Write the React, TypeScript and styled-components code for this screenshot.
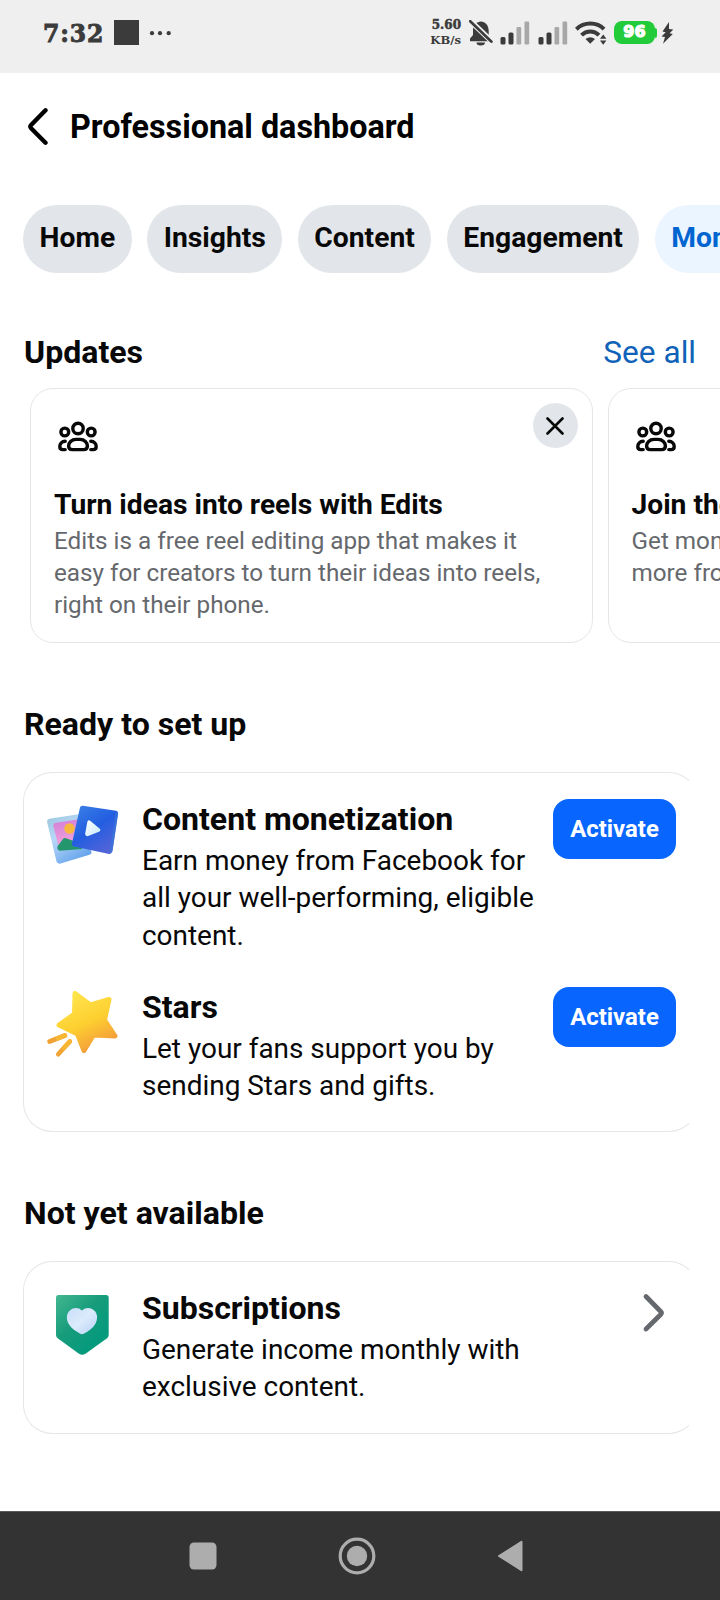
import React from "react";
import styled, { createGlobalStyle } from "styled-components";

const GlobalStyle = createGlobalStyle`
  * { box-sizing: border-box; }
  body { margin: 0; background: #fff; color: #080809; font-family: Roboto, "Liberation Sans", sans-serif; }
  h1, h2, h3, p { margin: 0; }
  button { border: 0; padding: 0; font: inherit; color: inherit; }
  svg { display: block; flex: none; }
`;

const Screen = styled.div`
  width: 720px;
  height: 1600px;
  display: flex;
  flex-direction: column;
  overflow: hidden;
  background: #fff;
`;

const StatusBar = styled.header`
  height: 73px;
  flex: none;
  display: flex;
  justify-content: space-between;
  padding: 0 46px 8px 43px;
  align-items: center;
  background: #efefef;
  color: #3b3b3b;
`;

const StatusGroup = styled.div`
  display: flex;
  align-items: center;
`;

const Clock = styled.span`
  width: 71px;
  padding-top: 2px;
  font: bold 23.5px/26px "DejaVu Serif", serif;
  letter-spacing: 0.9px;
  -webkit-text-stroke: 0.9px #3b3b3b;
`;

const AppSquare = styled.span`
  width: 25px;
  height: 25px;
  background: #3b3b3b;
`;

const NetSpeed = styled.div`
  width: 32px;
  display: flex;
  flex-direction: column;
  align-items: flex-end;
  white-space: nowrap;
  margin-right: 8px;
`;

const SpeedValue = styled.div`
  font: bold 12px/16px "DejaVu Serif", serif;
  -webkit-text-stroke: 0.5px #3b3b3b;
`;

const SpeedUnit = styled.div`
  font: bold 11.6px/15px "DejaVu Serif", serif;
`;

const Spacer = styled.span<{ $width: number }>`
  width: ${(p) => p.$width}px;
`;

const Battery = styled.div`
  width: 41px;
  height: 23px;
  margin-left: 7px;
  border-radius: 8px;
  background: #22cb3a;
  color: #fff;
  text-align: center;
  font: bold 16px/21px "DejaVu Sans", sans-serif;
  -webkit-text-stroke: 1.2px #fff;
`;

const BatteryNub = styled.span`
  width: 2px;
  height: 10px;
  margin-right: 3px;
  border-radius: 0 2px 2px 0;
  background: #22cb3a;
`;

const TitleBar = styled.div`
  height: 107px;
  flex: none;
  display: flex;
  align-items: center;
  gap: 21.5px;
  padding: 1px 0 0 26.5px;
`;

const Heading = styled.h1`
  font-size: 32.3px;
  line-height: 40px;
  font-weight: 700;
  color: #000;
`;

const Tabs = styled.nav`
  display: flex;
  gap: 15.3px;
  padding: 25px 0 0 23px;
  flex: none;
`;

const Tab = styled.button<{ $active?: boolean }>`
  height: 68px;
  flex: none;
  padding: 0 16.6px 3px;
  border-radius: 34px;
  font-size: 28.25px;
  font-weight: 700;
  background: ${(p) => (p.$active ? "#ebf5ff" : "#e2e5e9")};
  color: ${(p) => (p.$active ? "#0064d1" : "#080809")};
`;

const SectionHead = styled.div<{ $top: number; $bottom: number }>`
  display: flex;
  justify-content: space-between;
  height: 40px;
  flex: none;
  margin: ${(p) => p.$top}px 24px ${(p) => p.$bottom}px;
  line-height: 40px;
  font-size: 32.1px;
`;

const SectionTitle = styled.h2`
  font-size: inherit;
  font-weight: 700;
`;

const SeeAll = styled.a`
  padding-top: 1px;
  font-size: 31.6px;
  color: #0f62b8;
`;

const Carousel = styled.div`
  display: flex;
  gap: 15px;
  padding-left: 30px;
  flex: none;
`;

const UpdateCard = styled.article`
  width: 562.5px;
  height: 255px;
  flex: none;
  padding: 14px 14px 0 23px;
  border: 1px solid #e4e6e8;
  border-radius: 23px;
`;

const UpdateTop = styled.div`
  display: flex;
  justify-content: space-between;
  height: 85px;
  padding-left: 3px;
`;

const PeopleSlot = styled.div`
  padding-top: 18px;
`;

const CloseButton = styled.button`
  width: 45px;
  height: 45px;
  border-radius: 50%;
  background: #e2e5e9;
  display: grid;
  place-items: center;
`;

const UpdateTitle = styled.h3`
  font-size: 28.2px;
  line-height: 34px;
  font-weight: 700;
  white-space: nowrap;
`;

const UpdateText = styled.p`
  margin-top: 3px;
  font-size: 24.25px;
  line-height: 32px;
  color: #65686c;
  white-space: nowrap;
`;

const CardClip = styled.div`
  width: 667px;
  margin-left: 23px;
  overflow: hidden;
  flex: none;
`;

const ProductCard = styled.div<{ $height: number }>`
  width: 675px;
  height: ${(p) => p.$height}px;
  padding: 26px 21px 0 22px;
  border: 1px solid #e4e6e8;
  border-right-color: transparent;
  border-radius: 29px;
  display: flex;
  flex-direction: column;
  gap: 33px;
`;

const Product = styled.div`
  display: flex;
  align-items: flex-start;
`;

const Art = styled.div<{ $left?: number; $top?: number }>`
  width: 96px;
  flex: none;
  padding-top: ${(p) => p.$top ?? 0}px;
  margin-left: ${(p) => p.$left ?? 0}px;
  margin-right: ${(p) => -(p.$left ?? 0)}px;
`;

const ProductBody = styled.div`
  flex: 1;
  padding-top: 1px;
  white-space: nowrap;
`;

const ProductTitle = styled.h3`
  font-size: 32.05px;
  line-height: 39px;
  font-weight: 700;
`;

const ProductText = styled.p`
  margin-top: 2.5px;
  font-size: 27.95px;
  line-height: 37.5px;
`;

const ActivateButton = styled.button`
  width: 123px;
  height: 60px;
  border-radius: 16px;
  background: #0866ff;
  color: #fff;
  font-size: 23.9px;
  font-weight: 700;
`;

const ChevronSlot = styled.div`
  padding: 5px 10.5px 0 0;
`;

const NavBar = styled.footer`
  height: 89px;
  flex: none;
  margin-top: auto;
  display: flex;
  align-items: center;
  padding-left: 189px;
  background: #333;
  border-top: 1px solid #5a5a5a;
`;

const NavKey = styled.div<{ $gap: number }>`
  margin-right: ${(p) => p.$gap}px;
`;

const Dots = () => (
  <svg width="34" height="26" viewBox="0 0 34 26" fill="#3b3b3b">
    <circle cx="13" cy="13.2" r="2.100" />
    <circle cx="21" cy="13.2" r="2.100" />
    <circle cx="29.700" cy="13.2" r="2.100" />
  </svg>
);

const Muted = () => (
  <svg width="24" height="26" viewBox="0 0 24 26">
    <path d="M12 1.500C16 1.500 19.700 5 19.700 11v4.500l1.500 3v2.700H1V18.500l3-3.500v-5C4 5 8 1.500 12 1.500ZM7.500 22.500h8.500a4.200 3 0 0 1-8.500 0Z" fill="#3b3b3b" />
    <path d="M-.5-.8 24.500 23" stroke="#efefef" strokeWidth="5.500" />
    <path d="M1.200 1.200 22.500 21.700" stroke="#3b3b3b" strokeWidth="2.600" strokeLinecap="round" />
  </svg>
);

const Signal = () => (
  <svg width="30" height="24" viewBox="0 0 30 24" fill="#3b3b3b">
    <rect x=".5" y="16" width="5" height="7.500" rx="1.500" />
    <rect x="8.500" y="11.500" width="5" height="12" rx="1.500" />
    <rect x="16.500" y="6" width="4.700" height="17.500" rx="1.200" fill="#a8a8a8" />
    <rect x="24.500" y=".5" width="4.700" height="23" rx="1.200" fill="#a8a8a8" />
  </svg>
);

const Wifi = () => (
  <svg width="32" height="24" viewBox="0 0 32 24" fill="none" stroke="#3b3b3b" strokeWidth="4">
    <path d="M1.300 8.200C9 .7 22 .7 29 8.200" />
    <path d="M6.500 14.200c5-5 12.500-5 17.500 0" />
    <path d="M10.500 18Q15.200 14.500 20 18l-4.800 4.700Z" fill="#3b3b3b" stroke="none" />
    <path d="M25 17.800 28.200 13.500 31.400 17.800ZM25 19.500h6.400l-3.200 4.300Z" fill="#3b3b3b" stroke="none" />
  </svg>
);

const Bolt = () => (
  <svg width="14" height="24" viewBox="0 0 14 24" fill="#3b3b3b">
    <path d="M9 1 2.500 10.500l3.200.8L1.500 15.500l3.500.5L3 22.800 12.800 13l-3.200-.8 3.700-3.700-4.300-.5Z" />
  </svg>
);

const Back = () => (
  <svg width="22" height="40" viewBox="0 0 22 40" fill="none" stroke="#000" strokeWidth="4.400" strokeLinecap="round" strokeLinejoin="round">
    <path d="M18.500 3.300 4.100 18Q2.600 19.600 4.100 21.200L18.500 35.700" />
  </svg>
);

const People = () => (
  <svg width="42" height="32" viewBox="0 0 42 32" fill="none" stroke="#080809" strokeWidth="3.400" strokeLinecap="round" strokeLinejoin="round">
    <circle cx="21" cy="7.500" r="5.200" />
    <circle cx="7.800" cy="11" r="3.900" />
    <circle cx="34.200" cy="11" r="3.900" />
    <path d="M19 18.400h4c4.500 0 7.400 3.200 7.400 6.500 0 2.400-1.400 3.700-3.800 3.700H15.400c-2.400 0-3.800-1.300-3.800-3.700 0-3.300 2.900-6.500 7.400-6.500Z" />
    <path d="M8.200 20.300C4.800 20.300 2.800 22.600 2.800 25.600c0 2 1.200 3 3 3h2.400M33.800 20.300c3.400 0 5.400 2.300 5.400 5.300 0 2-1.200 3-3 3h-2.400" />
  </svg>
);

const Cross = () => (
  <svg width="18" height="18" viewBox="0 0 18 18" stroke="#080809" strokeWidth="2.600" strokeLinecap="round">
    <path d="m1.500 1.500 15 15m0-15-15 15" />
  </svg>
);

const MonetizationArt = () => (
  <svg width="74" height="68" viewBox="0 0 74 68">
    <defs>
      <linearGradient id="frame" x1="0" y1="0" x2=".6" y2="1"><stop stopColor="#9bc6dc" /><stop offset=".45" stopColor="#b8d8f8" /><stop offset="1" stopColor="#68a5ed" /></linearGradient>
      <linearGradient id="photo" x1="0" y1="0" x2=".2" y2="1"><stop stopColor="#d47dd8" /><stop offset="1" stopColor="#f3a9dc" /></linearGradient>
      <linearGradient id="video" x1=".1" y1="0" x2=".75" y2="1"><stop stopColor="#397fe6" /><stop offset=".5" stopColor="#235ee1" /><stop offset="1" stopColor="#5664d7" /></linearGradient>
      <linearGradient id="play" x1="0" y1="0" x2="1" y2="1"><stop stopColor="#fff" /><stop offset="1" stopColor="#c5e9fa" /></linearGradient>
    </defs>
    <path d="M2.200 18.500q-.6-3 2.200-3.700L35 10l11.500 38q.5 2-2 2.700L15.500 59.500q-3 .7-4-2Z" fill="url(#frame)" />
    <path d="m8.200 21.500 1.300-2.500 23-3.500 4 27.500-20.500 3q-1.500-.2-2-2Z" fill="url(#photo)" />
    <circle cx="24.500" cy="24.500" r="5.200" fill="#f8b83d" />
    <path d="m12.700 42 5.300-7q1-1.300 3-.7L37 40v5L15 46.800q-3.500-.7-2.300-4.800Z" fill="#23966d" />
    <path d="M35 3.500q.7-2.200 3-1.800l33 5q2.500.7 2 3.500L67.500 47q-1 3.500-4.500 2.800l-34-7.300q-2.700-.8-2-3.300Z" fill="url(#video)" />
    <path d="M67.500 47 73 9.500 71 7l-7 43Z" fill="#3978d9" opacity=".65" />
    <path d="m42.300 18-2.100 11.500q0 3 3 2.600L54 27.800q2.500-1.200.5-3.200L44.800 16.600q-2-1-2.500 1.400Z" fill="url(#play)" />
  </svg>
);

const StarsArt = () => (
  <svg width="74" height="70" viewBox="0 0 74 70">
    <defs>
      <linearGradient id="star" x1=".25" y1=".05" x2=".7" y2="1"><stop stopColor="#ffe34b" /><stop offset=".5" stopColor="#fdcf30" /><stop offset="1" stopColor="#f3983b" /></linearGradient>
    </defs>
    <path d="M29 3.500 44.500 15 63 9.500 58.500 30 69 46 47.500 45 38 60.500 31.500 44 13 35 28.500 24Z" fill="url(#star)" stroke="url(#star)" strokeWidth="5" strokeLinejoin="round" />
    <path d="M3.500 51.500 19 45.500" stroke="#f0a333" strokeWidth="4.600" strokeLinecap="round" />
    <path d="M12.200 64.300 23.800 51.500" stroke="#f1a336" strokeWidth="4.600" strokeLinecap="round" />
    <path d="M12 48.200 19 45.500M18 57.800 23.800 51.500" stroke="#f8b733" strokeWidth="4.600" strokeLinecap="round" />
  </svg>
);

const SubscriptionsArt = () => (
  <svg width="74" height="70" viewBox="0 0 74 70">
    <defs>
      <linearGradient id="badge" x1="0" y1="0" x2=".7" y2=".8"><stop stopColor="#43b891" /><stop offset=".55" stopColor="#179c7b" /><stop offset="1" stopColor="#069a7d" /></linearGradient>
      <linearGradient id="heart" x1="0" y1="0" x2="1" y2="1"><stop stopColor="#c9def8" /><stop offset=".5" stopColor="#dcebfc" /><stop offset="1" stopColor="#b5d0f5" /></linearGradient>
    </defs>
    <path d="M12.500 6h47.500q2.700 0 2.700 2.700V46q0 2-2 3.500L39.500 64.800q-3.200 2-6.500 0L12 49.500Q10 48 10 46V8.700Q10 6 12.500 6Z" fill="url(#badge)" />
    <path d="M36 21.500c4-3.800 9.500-3 13 .8 3.500 4.500 2 9.700.3 12.700-2.800 4.800-7.300 7.300-11.500 9.800q-1.800.9-3.600 0C30 42.300 25.500 39.700 22.700 35c-1.700-3-3.200-8.200.3-12.700 3.500-3.800 9-4.600 13-.8Z" fill="url(#heart)" />
  </svg>
);

const Chevron = () => (
  <svg width="24" height="40" viewBox="0 0 24 40" fill="none" stroke="#65686c" strokeWidth="4.700" strokeLinecap="round" strokeLinejoin="round">
    <path d="m4 3.500 14.700 15q1.500 1.500 0 3L4 36" />
  </svg>
);

const updates = [
  { title: "Turn ideas into reels with Edits", lines: ["Edits is a free reel editing app that makes it", "easy for creators to turn their ideas into reels,", "right on their phone."] },
  { title: "Join the", lines: ["Get mon", "more fro"] },
];

const Lines = ({ lines }: { lines: string[] }) => (
  <>
    {lines.map((line, i) => (
      <React.Fragment key={line}>
        {i > 0 && <br />}
        {line}
      </React.Fragment>
    ))}
  </>
);

interface ProductRowProps {
  art: React.ReactNode;
  artLeft?: number;
  artTop?: number;
  title: string;
  lines: string[];
  action: React.ReactNode;
}

const ProductRow = ({ art, artLeft, artTop, title, lines, action }: ProductRowProps) => (
  <Product>
    <Art $left={artLeft} $top={artTop}>{art}</Art>
    <ProductBody>
      <ProductTitle>{title}</ProductTitle>
      <ProductText><Lines lines={lines} /></ProductText>
    </ProductBody>
    {action}
  </Product>
);

export default function App() {
  return (
    <Screen>
      <GlobalStyle />
      <StatusBar>
        <StatusGroup>
          <Clock>7:32</Clock>
          <AppSquare />
          <Dots />
        </StatusGroup>
        <StatusGroup>
          <NetSpeed>
            <SpeedValue>5.60</SpeedValue>
            <SpeedUnit>KB/s</SpeedUnit>
          </NetSpeed>
          <Muted />
          <Spacer $width={7} />
          <Signal />
          <Spacer $width={7.5} />
          <Signal />
          <Spacer $width={7.5} />
          <Wifi />
          <Battery>96</Battery>
          <BatteryNub />
          <Bolt />
        </StatusGroup>
      </StatusBar>

      <TitleBar>
        <Back />
        <Heading>Professional dashboard</Heading>
      </TitleBar>

      <Tabs>
        <Tab>Home</Tab>
        <Tab>Insights</Tab>
        <Tab>Content</Tab>
        <Tab>Engagement</Tab>
        <Tab $active>Monetization</Tab>
      </Tabs>

      <SectionHead $top={59} $bottom={16}>
        <SectionTitle>Updates</SectionTitle>
        <SeeAll>See all</SeeAll>
      </SectionHead>
      <Carousel>
        {updates.map((u) => (
          <UpdateCard key={u.title}>
            <UpdateTop>
              <PeopleSlot><People /></PeopleSlot>
              <CloseButton aria-label="Dismiss"><Cross /></CloseButton>
            </UpdateTop>
            <UpdateTitle>{u.title}</UpdateTitle>
            <UpdateText><Lines lines={u.lines} /></UpdateText>
          </UpdateCard>
        ))}
      </Carousel>

      <SectionHead $top={61} $bottom={28}>
        <SectionTitle>Ready to set up</SectionTitle>
      </SectionHead>
      <CardClip>
        <ProductCard $height={360}>
          <ProductRow
            art={<MonetizationArt />}
            artLeft={-1.5}
            artTop={5}
            title="Content monetization"
            lines={["Earn money from Facebook for", "all your well-performing, eligible", "content."]}
            action={<ActivateButton>Activate</ActivateButton>}
          />
          <ProductRow
            art={<StarsArt />}
            artTop={3}
            title="Stars"
            lines={["Let your fans support you by", "sending Stars and gifts."]}
            action={<ActivateButton>Activate</ActivateButton>}
          />
        </ProductCard>
      </CardClip>

      <SectionHead $top={61} $bottom={28}>
        <SectionTitle>Not yet available</SectionTitle>
      </SectionHead>
      <CardClip>
        <ProductCard $height={173}>
          <ProductRow
            art={<SubscriptionsArt />}
            artTop={1}
            title="Subscriptions"
            lines={["Generate income monthly with", "exclusive content."]}
            action={<ChevronSlot><Chevron /></ChevronSlot>}
          />
        </ProductCard>
      </CardClip>

      <NavBar>
        <NavKey $gap={121}>
          <svg width="28" height="28" viewBox="0 0 28 28"><rect x=".5" y=".5" width="27" height="27" rx="4.500" fill="#adadad" /></svg>
        </NavKey>
        <NavKey $gap={121}>
          <svg width="38" height="38" viewBox="0 0 38 38"><circle cx="19" cy="19" r="16.800" fill="none" stroke="#adadad" strokeWidth="3.200" /><circle cx="19" cy="19" r="10.200" fill="#adadad" /></svg>
        </NavKey>
        <NavKey $gap={0}>
          <svg width="27" height="32" viewBox="0 0 27 32"><path d="M2 16 24.500 1.800v28.400Z" fill="#adadad" stroke="#adadad" strokeWidth="2" strokeLinejoin="round" /></svg>
        </NavKey>
      </NavBar>
    </Screen>
  );
}
